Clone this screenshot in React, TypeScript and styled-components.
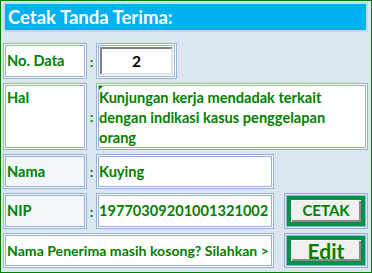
import React from 'react'
import styled, { createGlobalStyle } from 'styled-components'

const GlobalStyle = createGlobalStyle`
  html, body {
    margin: 0;
    padding: 0;
    background: #ffffff;
  }
  * {
    box-sizing: border-box;
  }
`

const Frame = styled.div`
  width: 372px;
  height: 273px;
  border: 1px solid #008000;
  background: #dce6f1;
  padding: 1px 3px 0 2px;
  font-family: Lato, 'Noto Sans', sans-serif;
  font-weight: 700;
  color: #008000;
`

const Sheet = styled.div`
  display: grid;
  grid-template-columns: 84px 9px 178px 10px 84px;
  grid-template-rows: 37px 36px 67px 35px 36px 35px;
  row-gap: 4px;
`

const Header = styled.div`
  grid-column: 1 / -1;
  margin-bottom: 7px;
  border: 2px solid #c5d9f1;
  background: #00b0f0;
  color: #ffffff;
  font-size: 18.5px;
  line-height: 26px;
  padding-left: 3px;
  white-space: nowrap;
`

const Cell = styled.div<{ $span?: string; $tint?: boolean; $top?: boolean }>`
  grid-column: ${({ $span }) => $span ?? 'auto'};
  border: 3px double #95b3d7;
  background: ${({ $tint }) => ($tint ? '#f2f6fa' : '#ffffff')};
  display: flex;
  align-items: ${({ $top }) => ($top ? 'flex-start' : 'center')};
  font-size: 14.6px;
  line-height: 20px;
  white-space: nowrap;
`

const Label = styled(Cell)`
  padding: ${({ $top }) => ($top ? '2px 0 0 1px' : '0 0 0 1px')};
`

const Notice = styled(Cell)`
  grid-column: 1 / 4;
  padding-left: 1px;
  font-size: 14.1px;
`

const Colon = styled.div`
  display: flex;
  align-items: center;
  justify-content: center;
  font-size: 14px;
`

const Value = styled(Cell)`
  position: relative;
  padding: ${({ $top }) => ($top ? '2px 0 0 0' : '0')};
  white-space: ${({ $top }) => ($top ? 'normal' : 'nowrap')};
`

const Marker = styled.span`
  position: absolute;
  left: 0;
  top: 0;
  width: 0;
  height: 0;
  border-top: 4px solid #008000;
  border-right: 4px solid transparent;
`

const NumberBox = styled.div`
  width: 81px;
  border: 3px double #95b3d7;
  background: #ffffff;
  padding: 1px;
`

const NumberField = styled.div`
  height: 100%;
  border-top: 2px solid #808080;
  border-left: 2px solid #808080;
  border-right: 2px solid #e3e3e3;
  border-bottom: 2px solid #e3e3e3;
  display: flex;
  align-items: center;
  justify-content: center;
  color: #000000;
  font-size: 15.5px;
`

const ButtonFrame = styled.div`
  grid-column: 5;
  border: 3px double #95b3d7;
  background: #dce6f1;
  display: flex;
`

const Button = styled.button<{ $big?: boolean }>`
  flex: 1;
  margin: 0;
  border: 4px solid #00924a;
  background: #f0f0f0;
  box-shadow: inset 1px 1px 0 #ffffff, inset -2px -2px 0 #8a8a8a;
  color: #008000;
  font-family: inherit;
  font-weight: 700;
  font-size: ${({ $big }) => ($big ? '21px' : '15px')};
  line-height: 1;
  padding: 0 0 ${({ $big }) => ($big ? '3px' : '1px')};
  cursor: pointer;
`

export default function App() {
  return (
    <>
      <GlobalStyle />
      <Frame>
        <Sheet>
          <Header>Cetak Tanda Terima:</Header>

          <Label>No. Data</Label>
          <Colon>:</Colon>
          <NumberBox>
            <NumberField>2</NumberField>
          </NumberBox>
          <div />
          <div />

          <Label $top>Hal</Label>
          <Colon>:</Colon>
          <Value $span="3 / 6" $top>
            <Marker />
            Kunjungan kerja mendadak terkait
            <br />
            dengan indikasi kasus penggelapan
            <br />
            orang
          </Value>

          <Label $tint>Nama</Label>
          <Colon>:</Colon>
          <Value>Kuying</Value>
          <div />
          <div />

          <Label $tint>NIP</Label>
          <Colon>:</Colon>
          <Value>19770309201001321002</Value>
          <div />
          <ButtonFrame>
            <Button>CETAK</Button>
          </ButtonFrame>

          <Notice>Nama Penerima masih kosong? Silahkan &gt;</Notice>
          <div />
          <ButtonFrame>
            <Button $big>Edit</Button>
          </ButtonFrame>
        </Sheet>
      </Frame>
    </>
  )
}
